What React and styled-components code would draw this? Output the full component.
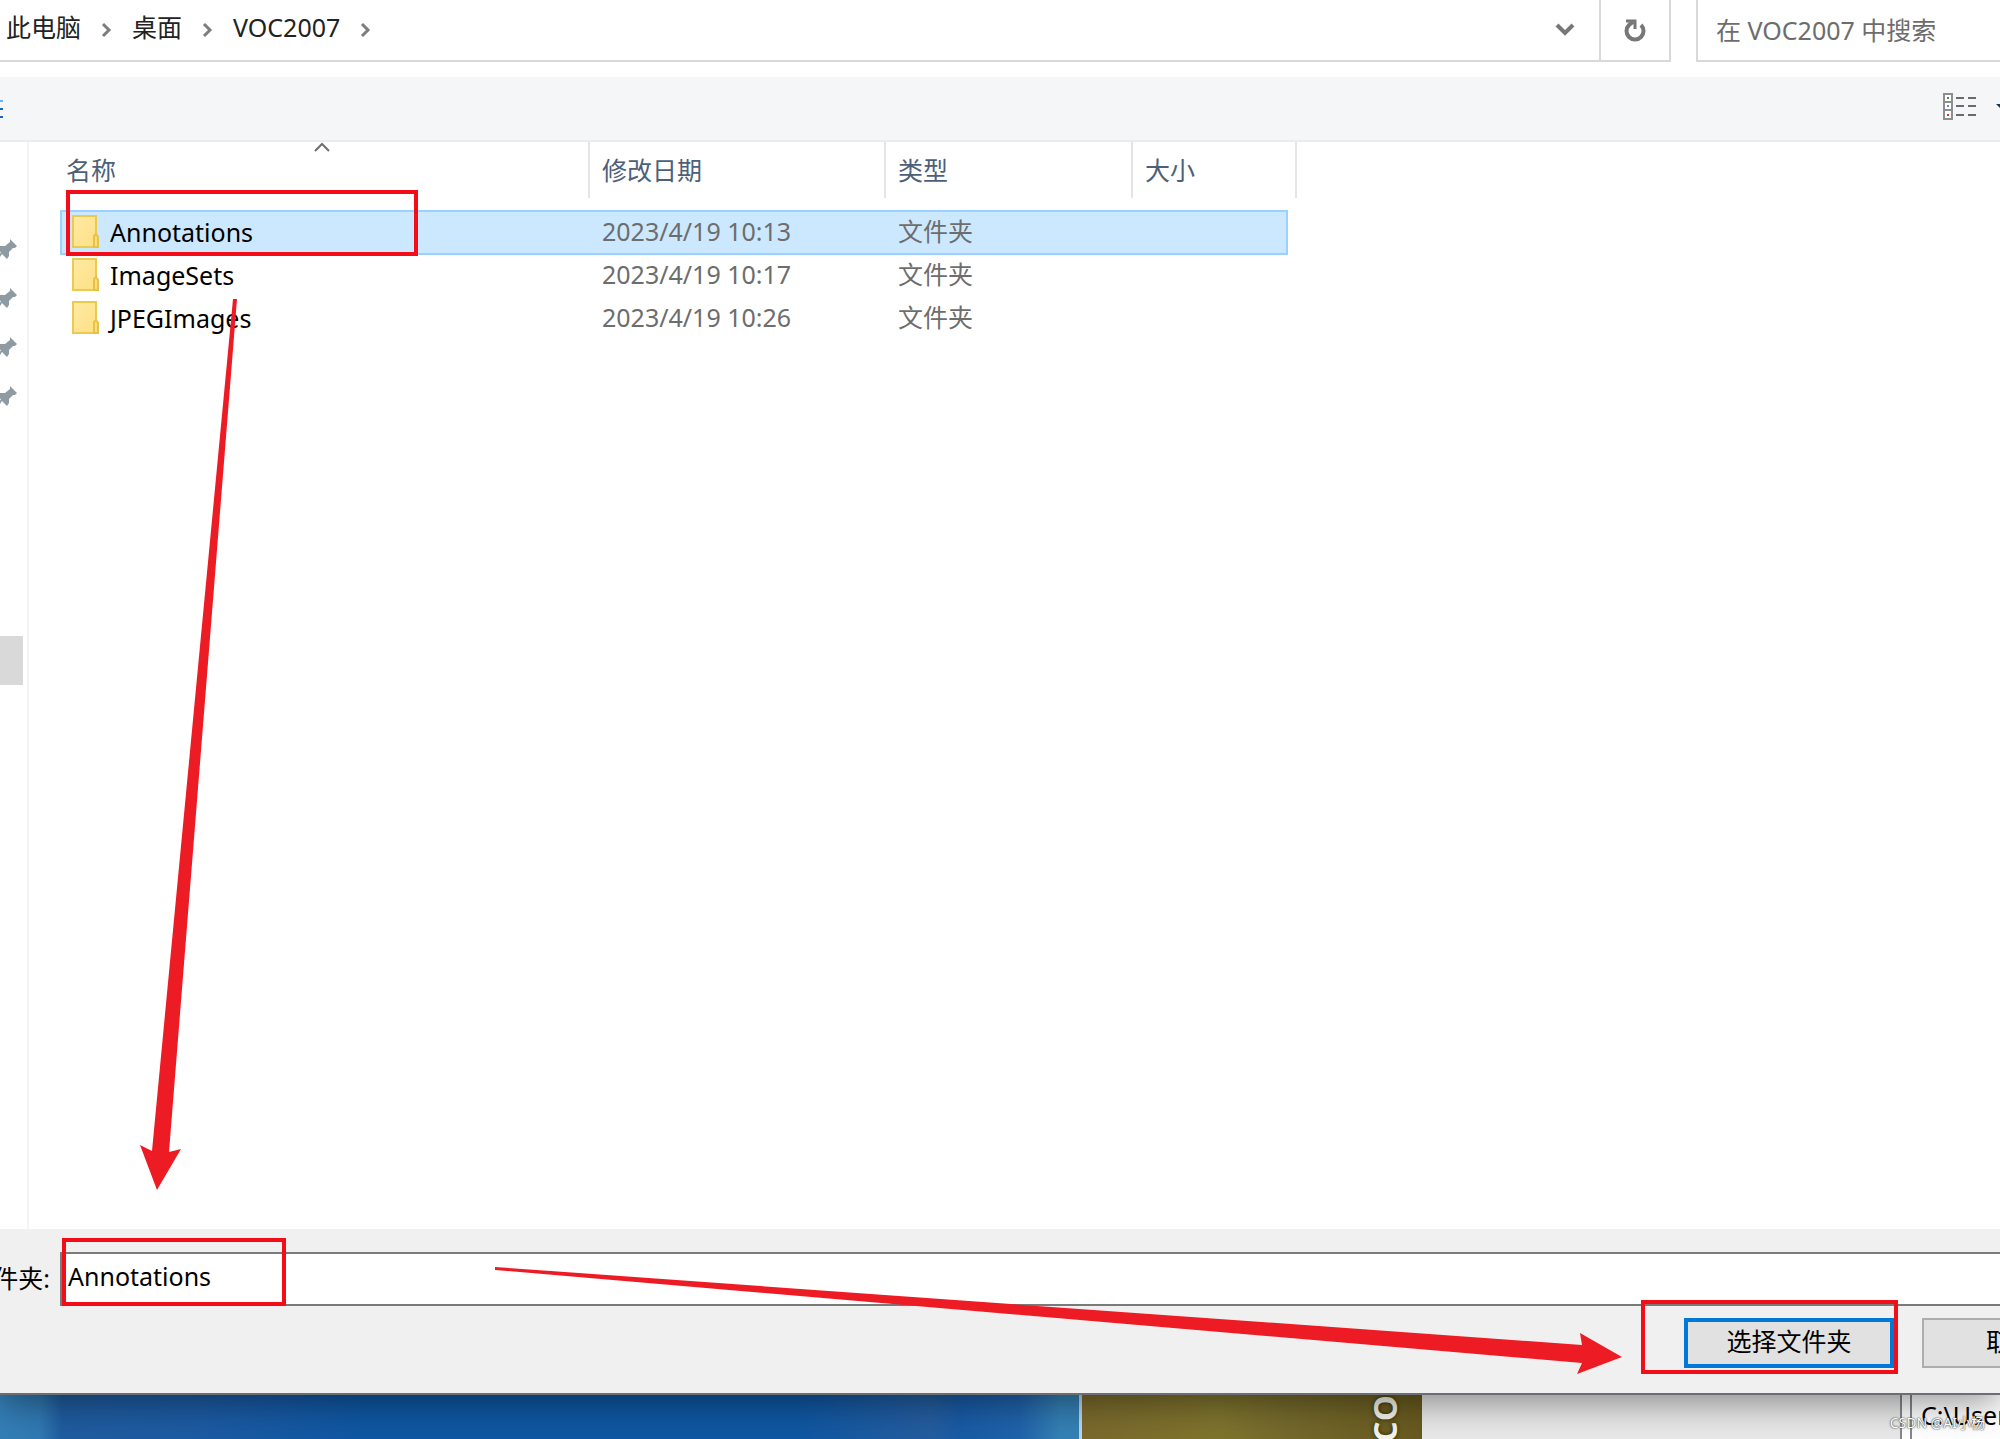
import styled, { createGlobalStyle } from "styled-components";

const folders = [
  { name: "Annotations", date: "2023/4/19 10:13", type: "文件夹", selected: true },
  { name: "ImageSets", date: "2023/4/19 10:17", type: "文件夹" },
  { name: "JPEGImages", date: "2023/4/19 10:26", type: "文件夹" },
];

const crumbs = ["此电脑", "桌面", "VOC2007"];

function Crumb({ children }) {
  return (
    <CrumbItem>
      <a href="#path">{children}</a>
      <svg width="12" height="16" viewBox="0 0 12 16" fill="none">
        <path d="M2 2l6 6-6 6" stroke="#7d7d7d" strokeWidth="3" />
      </svg>
    </CrumbItem>
  );
}

function FolderIcon() {
  return (
    <svg width="28" height="34" viewBox="0 0 28 34">
      <defs>
        <linearGradient id="folder" x1="0" y1="0" x2="1" y2="1">
          <stop offset="0" stopColor="#ffeaa4" />
          <stop offset="1" stopColor="#fde083" />
        </linearGradient>
      </defs>
      <path
        d="M1 1h23v19l2 2v10H1z"
        fill="url(#folder)"
        stroke="#ecc94f"
        strokeWidth="2"
      />
      <path d="M22 32V21l2-2 2 3v10z" fill="#fbdd7d" stroke="#e8c147" strokeWidth="2" />
    </svg>
  );
}

function PinIcon() {
  return (
    <svg width="20" height="20" viewBox="0 0 20 20" fill="#8f9ba3">
      <path d="M13 0l7 7-2 2-2 0-4 4 0 4-2 3-5-5-2 3-3 0 0-3 4-1-3-5 2-2 5 0 5-4 0-2z" />
    </svg>
  );
}

function Arrows() {
  return (
    <ArrowLayer aria-hidden="true">
      <path d="M233 299l4 0-68 853 12-3-24 41-17-45 12 6z" />
      <path d="M495 1267l1087 78-2-12 42 24-45 17 5-11L495 1270z" />
    </ArrowLayer>
  );
}

export default function App() {
  return (
    <Page>
      <GlobalStyle />
      <Dialog>
        <AddressRow>
          <AddressBar>
            <Crumbs aria-label="路径">
              {crumbs.map((name) => (
                <Crumb key={name}>{name}</Crumb>
              ))}
            </Crumbs>
            <BarButton $width={68} aria-label="上一个位置">
              <svg width="20" height="14" viewBox="0 0 20 14" fill="none">
                <path d="M2 2l8 8 8-8" stroke="#777" strokeWidth="4" />
              </svg>
            </BarButton>
            <BarButton $width={70} $divided aria-label="刷新">
              <svg width="22" height="24" viewBox="0 0 22 24" fill="none" stroke="#777">
                <path d="M17 7a8.5 8.5 0 1 1-12 0l4-3" strokeWidth="4" />
                <path d="M2 3h9v8" strokeWidth="3" />
              </svg>
            </BarButton>
          </AddressBar>
          <Search type="search" aria-label="搜索" placeholder="在 VOC2007 中搜索" />
        </AddressRow>

        <Toolbar>
          <NewFolder href="#new" aria-label="新建文件夹">
            <svg width="3" height="20" viewBox="0 0 3 20">
              <path d="M0 2h3" stroke="#6db3ef" strokeWidth="2" />
              <path d="M0 10h3M0 18h3" stroke="#1a66b8" strokeWidth="2" />
            </svg>
          </NewFolder>
          <ViewButton aria-label="视图">
            <svg width="34" height="28" viewBox="0 0 34 28" fill="none">
              <path
                d="M1 1h8v25H1zM1 9h8M1 17h8"
                fill="#fff"
                stroke="#8e8e8e"
                strokeWidth="2"
              />
              <path d="M4 5h2" stroke="#3f8f6d" strokeWidth="2" />
              <path d="M4 13h2" stroke="#4a90e2" strokeWidth="2" />
              <path d="M4 22h2" stroke="#e03030" strokeWidth="2" />
              <path
                d="M13 5h8M25 5h8M13 13h8M25 13h8M13 22h8M25 22h8"
                stroke="#6a6a6a"
                strokeWidth="2"
              />
            </svg>
            <svg width="12" height="8" viewBox="0 0 12 8">
              <path d="M0 1h12L6 7z" fill="#1b3558" />
            </svg>
          </ViewButton>
        </Toolbar>

        <Body>
          <Sidebar>
            <Pins>
              {[1, 2, 3, 4].map((n) => (
                <PinIcon key={n} />
              ))}
            </Pins>
            <SidebarSelection />
          </Sidebar>
          <Files>
            <thead>
              <tr>
                <HeadCell $width={529}>
                  名称
                  <SortMark width="18" height="11" viewBox="0 0 18 11" fill="none">
                    <path d="M2 9l7-7 7 7" stroke="#6e6e6e" strokeWidth="2" />
                  </SortMark>
                </HeadCell>
                <HeadCell $width={296}>修改日期</HeadCell>
                <HeadCell $width={247}>类型</HeadCell>
                <HeadCell $width={164}>大小</HeadCell>
              </tr>
            </thead>
            <tbody>
              {folders.map((folder) => (
                <FileRow key={folder.name} $selected={folder.selected}>
                  <td>
                    <FileName>
                      <FolderIcon />
                      {folder.name}
                    </FileName>
                  </td>
                  <td>{folder.date}</td>
                  <td>{folder.type}</td>
                  <td>
                    <SizeSlot />
                  </td>
                </FileRow>
              ))}
            </tbody>
          </Files>
        </Body>

        <Footer>
          <FieldRow>
            <FieldLabel htmlFor="folder-name">文件夹:</FieldLabel>
            <FolderInput id="folder-name" defaultValue="Annotations" />
          </FieldRow>
          <Actions>
            <ActionButton $width={210} $primary>
              选择文件夹
            </ActionButton>
            <ActionButton $width={178}>取消</ActionButton>
          </Actions>
        </Footer>
      </Dialog>

      <Desktop>
        <Wallpaper />
        <Poster>
          <PosterText>CO</PosterText>
        </Poster>
        <Panel />
        <PathBox>C:\Users</PathBox>
      </Desktop>

      <Highlight $left={66} $top={190} $width={352} $height={66} />
      <Highlight $left={62} $top={1238} $width={224} $height={68} />
      <Highlight $left={1641} $top={1300} $width={257} $height={74} />
      <Arrows />
      <Watermark>CSDN @AI小杨</Watermark>
    </Page>
  );
}

const GlobalStyle = createGlobalStyle`
  * {
    box-sizing: border-box;
  }
  body {
    margin: 0;
    background: #fff;
  }
  body, input, button {
    font-family: "Noto Sans", "Noto Sans CJK SC", sans-serif;
    font-size: 25px;
    line-height: 34px;
  }
  a {
    color: inherit;
    text-decoration: none;
  }
  button {
    cursor: pointer;
  }
`;

const Page = styled.div`
  position: relative;
  display: flex;
  flex-direction: column;
  min-height: 100vh;
  overflow: hidden;
  color: #000;
`;

const Dialog = styled.main`
  position: relative;
  z-index: 1;
  flex: 1;
  display: flex;
  flex-direction: column;
  background: #fff;
  border-bottom: 2px solid #6b6f73;
  box-shadow: 0 6px 36px rgba(0, 0, 0, 0.45);
`;

const AddressRow = styled.div`
  display: flex;
  gap: 25px;
  height: 62px;
  margin-bottom: 15px;
`;

const AddressBar = styled.div`
  flex: 1;
  display: flex;
  border: 2px solid #d9d9d9;
  border-width: 0 2px 2px 0;
`;

const Crumbs = styled.nav`
  flex: 1;
  display: flex;
  gap: 19px;
  padding: 10px 0 0 6px;
  color: #222;
`;

const CrumbItem = styled.span`
  display: flex;
  gap: 20px;
  height: 34px;
  svg {
    margin-top: 12px;
  }
`;

const BarButton = styled.button`
  display: flex;
  align-items: center;
  justify-content: center;
  width: ${({ $width }) => $width}px;
  padding: 0;
  border: 0;
  border-left: ${({ $divided }) => ($divided ? "2px solid #d9d9d9" : "0")};
  background: none;
`;

const Search = styled.input`
  width: 304px;
  padding: 0 0 0 18px;
  border: 2px solid #d9d9d9;
  border-width: 0 0 2px 2px;
  border-radius: 0;
  outline: none;
  background: #fff;
  &::placeholder {
    color: #6d6d6d;
    opacity: 1;
  }
`;

const Toolbar = styled.div`
  display: flex;
  align-items: center;
  justify-content: space-between;
  height: 65px;
  background: #f4f6f8;
  border-bottom: 2px solid #e9ebed;
`;

const NewFolder = styled.a`
  display: flex;
`;

const ViewButton = styled.button`
  display: flex;
  align-items: center;
  gap: 19px;
  margin-right: -8px;
  padding: 0 0 4px;
  border: 0;
  background: none;
`;

const Body = styled.div`
  flex: 1;
  display: flex;
`;

const Sidebar = styled.aside`
  width: 29px;
  padding-top: 97px;
  border-right: 2px solid #f5f5f5;
`;

const Pins = styled.div`
  display: flex;
  flex-direction: column;
  gap: 29px;
  margin-left: -3px;
`;

const SidebarSelection = styled.div`
  width: 23px;
  height: 49px;
  margin-top: 230px;
  background: #d9d9d9;
`;

const Files = styled.table`
  align-self: flex-start;
  margin-left: 31px;
  border-collapse: collapse;
  th,
  td {
    padding: 0 0 0 12px;
    text-align: left;
    font-weight: 400;
  }
  td:not(:first-child) {
    padding: 0 0 2px 13px;
  }
  td:last-child {
    padding: 0;
  }
  tbody::before {
    content: "";
    display: block;
    height: 12px;
  }
`;

const HeadCell = styled.th`
  position: relative;
  width: ${({ $width }) => $width}px;
  height: 56px;
  color: #4c607a;
  border-right: 2px solid #e5e5e5;
  &&:first-child {
    padding-left: 6px;
  }
`;

const SortMark = styled.svg`
  position: absolute;
  top: 0;
  left: 253px;
`;

const SizeSlot = styled.div`
  height: 43px;
  margin-right: 8px;
`;

const FileRow = styled.tr`
  height: 43px;
  color: #6d6d6d;
  td:not(:last-child),
  ${SizeSlot} {
    background: ${({ $selected }) => ($selected ? "#cce8ff" : "none")};
    box-shadow: ${({ $selected }) =>
      $selected ? "inset 0 2px #99d1ff, 0 2px #99d1ff" : "none"};
  }
  td:first-child {
    box-shadow: ${({ $selected }) =>
      $selected ? "inset 2px 2px #99d1ff, 0 2px #99d1ff" : "none"};
  }
  ${SizeSlot} {
    border-right: ${({ $selected }) => ($selected ? "2px solid #99d1ff" : "0")};
  }
`;

const FileName = styled.div`
  display: flex;
  align-items: center;
  gap: 10px;
  color: #000;
`;

const Footer = styled.footer`
  height: 164px;
  padding-top: 23px;
  background: #f0f0f0;
`;

const FieldRow = styled.div`
  display: flex;
  align-items: center;
`;

const FieldLabel = styled.label`
  display: flex;
  justify-content: flex-end;
  width: 60px;
  padding: 0 10px 2px 0;
  white-space: nowrap;
`;

const FolderInput = styled.input`
  flex: 1;
  height: 54px;
  padding: 0 0 6px 6px;
  border: 2px solid #7a7a7a;
  border-right: 0;
  border-radius: 0;
  outline: none;
`;

const Actions = styled.div`
  display: flex;
  justify-content: flex-end;
  gap: 28px;
  margin: 12px -100px 0 0;
`;

const ActionButton = styled.button`
  width: ${({ $width }) => $width}px;
  height: 50px;
  padding: 0 0 4px;
  border: ${({ $primary }) => ($primary ? "4px solid #0078d7" : "2px solid #adadad")};
  background: #e1e1e1;
  color: #000;
`;

const Desktop = styled.div`
  display: flex;
  height: 44px;
`;

const Wallpaper = styled.div`
  flex: 1;
  background: linear-gradient(
    90deg,
    #347eb6 0,
    #3079b3 40px,
    #1f5c9f 62px,
    #1c5ba3 200px,
    #0f57a3 360px,
    #0f57a3 800px,
    #245d9f 930px,
    #185ba5 960px,
    #1f63ab 1020px,
    #3480b5 1060px
  );
  border-right: 3px solid #b8d4f0;
`;

const Poster = styled.div`
  display: flex;
  align-items: flex-start;
  justify-content: flex-end;
  width: 340px;
  padding-right: 20px;
  overflow: hidden;
  background: linear-gradient(90deg, #7a6a2c, #7f742d 40%, #75692c 60%, #685a1f);
`;

const PosterText = styled.span`
  writing-mode: vertical-rl;
  transform: rotate(180deg);
  color: #f4f4ea;
  font-family: "Open Sans", sans-serif;
  font-size: 33px;
  font-weight: 700;
  text-shadow: 0 0 4px #2b2808;
`;

const Panel = styled.div`
  width: 480px;
  background: #e9e9e9;
  border-right: 2px solid #84898f;
`;

const PathBox = styled.div`
  width: 90px;
  margin-left: 8px;
  padding: 3px 0 0 9px;
  overflow: hidden;
  white-space: nowrap;
  background: #fff;
  border-left: 2px solid #84898f;
`;

const Highlight = styled.div`
  position: absolute;
  z-index: 2;
  top: ${({ $top }) => $top}px;
  left: ${({ $left }) => $left}px;
  width: ${({ $width }) => $width}px;
  height: ${({ $height }) => $height}px;
  border: 4px solid #f20d18;
  pointer-events: none;
`;

const ArrowLayer = styled.svg`
  position: absolute;
  z-index: 2;
  top: 0;
  left: 0;
  width: 100%;
  height: 100%;
  fill: #ed1c24;
  pointer-events: none;
`;

const Watermark = styled.span`
  position: absolute;
  z-index: 3;
  right: 15px;
  bottom: 7px;
  color: #fff;
  font-size: 14px;
  line-height: 18px;
  text-shadow: 0 0 1px #333, 0 0 2px #555;
`;
